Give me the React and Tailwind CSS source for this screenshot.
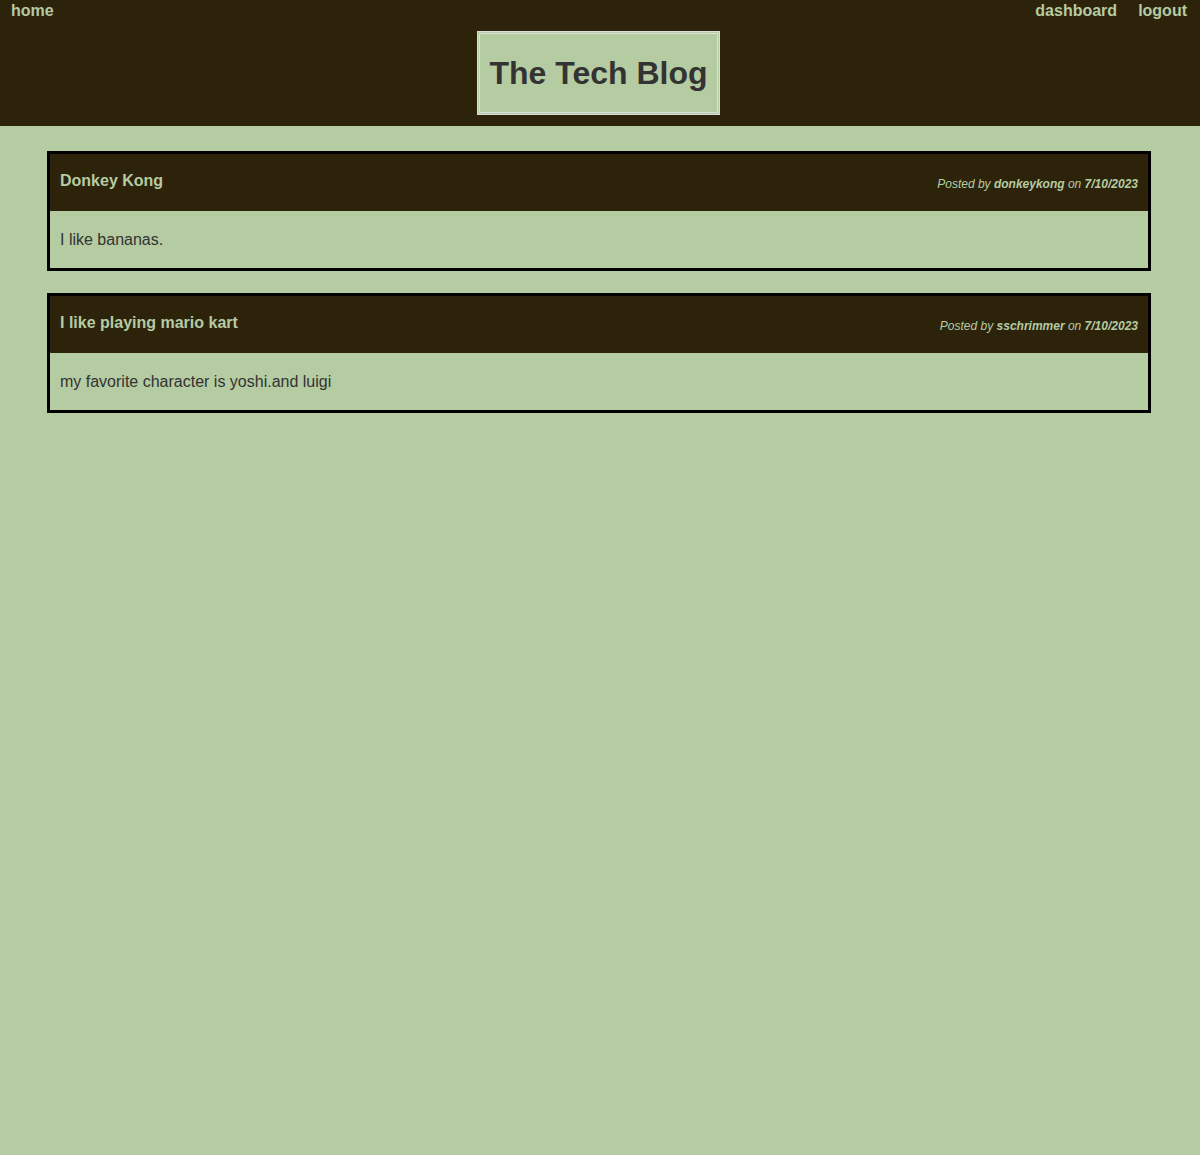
import React from "react"

const posts = [
  { title: "Donkey Kong", body: "I like bananas.", user: "donkeykong", date: "7/10/2023" },
  { title: "I like playing mario kart", body: "my favorite character is yoshi.and luigi", user: "sschrimmer", date: "7/10/2023" },
]

export default function App() {
  return (
    <div className="min-h-[1155px] bg-[#b5cba2] font-['Liberation_Sans',Arial,sans-serif] text-[#333]">

      {/* Header */}
      <header className="bg-[#2d230a] pb-[11px]">
        <nav className="flex justify-between px-[11px] pt-[1px] h-[20px] text-[16px] font-bold text-[#b5cba2] leading-[20px]">
          <a href="#">home</a>
          <div className="flex gap-[21px] pr-[2px]">
            <a href="#">dashboard</a>
            <a href="#">logout</a>
          </div>
        </nav>
        <div className="flex justify-center mt-[11px] pr-[3px]">
          <h1 className="bg-[#b5cba2] border-[3px] border-double border-[#ddd] px-[9px] h-[84px] flex items-center text-[32px] font-bold text-[#333]">
            The Tech Blog
          </h1>
        </div>
      </header>

      {/* Posts */}
      <main className="w-[1104px] ml-[47px] pt-[25px] flex flex-col gap-[22px]">
        {posts.map((p) => (
          <article key={p.title} className="border-[3px] border-black">
            <div className="bg-[#2d230a] px-[10px] h-[57px] flex justify-between items-center text-[#b5cba2]">
              <h2 className="text-[16px] font-bold -mt-[4px]">{p.title}</h2>
              <p className="text-[12px] italic mt-[2px]">
                Posted by <b>{p.user}</b> on <b>{p.date}</b>
              </p>
            </div>
            <div className="px-[10px] h-[57px] flex items-center text-[16px]">
              <p>{p.body}</p>
            </div>
          </article>
        ))}
      </main>
    </div>
  )
}
